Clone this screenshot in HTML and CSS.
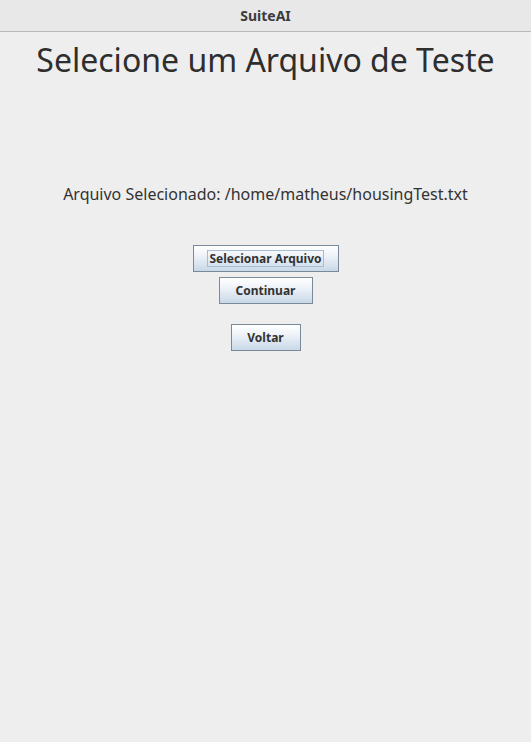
FILE: index.html
```html
<!DOCTYPE html>
<html>
<head>
<meta charset="utf-8">
<link rel="stylesheet" href="styles.css">
</head>
<body>
<div class="titlebar">SuiteAI</div>
<main class="content">
  <h1 class="heading">Selecione um Arquivo de Teste</h1>
  <p class="selected">Arquivo Selecionado: /home/matheus/housingTest.txt</p>
  <div class="actions">
    <button class="btn btn-select"><span class="focus">Selecionar Arquivo</span></button>
    <button class="btn btn-continue">Continuar</button>
    <button class="btn btn-back">Voltar</button>
  </div>
</main>
</body>
</html>
```
FILE: styles.css
```css
html, body {
  margin: 0;
  padding: 0;
  height: 100%;
  background: #eeeeee;
  font-family: "Noto Sans", "Open Sans", sans-serif;
  color: #333333;
}
.titlebar {
  height: 31px;
  background: #e8e8e8;
  border-bottom: 1px solid #b8b8b8;
  display: flex;
  align-items: center;
  justify-content: center;
  font-size: 14px;
  font-weight: bold;
  color: #3c3c3c;
  box-sizing: content-box;
}
.content {
  display: flex;
  flex-direction: column;
  align-items: center;
}
.heading {
  margin: 6px 0 0 0;
  font-size: 32px;
  font-weight: normal;
  line-height: 44px;
  color: #2e2e2e;
}
.selected {
  margin: 100px 0 0 0;
  font-size: 16px;
  line-height: 24px;
  color: #333333;
}
.actions {
  margin-top: 39px;
  display: flex;
  flex-direction: column;
  align-items: center;
}
.btn {
  height: 27px;
  box-sizing: border-box;
  border: 1px solid #7a8a99;
  background: linear-gradient(to bottom, #ffffff 0%, #f0f4f9 35%, #c8d8e8 100%);
  font-family: "Noto Sans", "Open Sans", sans-serif;
  font-weight: bold;
  font-size: 12px;
  color: #333333;
  padding: 0;
  display: flex;
  align-items: center;
  justify-content: center;
}
.btn-select { width: 146px; }
.btn-continue { width: 94px; margin-top: 5px; }
.btn-back { width: 70px; margin-top: 20px; }
.focus {
  border: 1px solid #a8bcd4;
  padding: 0 1px;
  line-height: 15px;
}
```
